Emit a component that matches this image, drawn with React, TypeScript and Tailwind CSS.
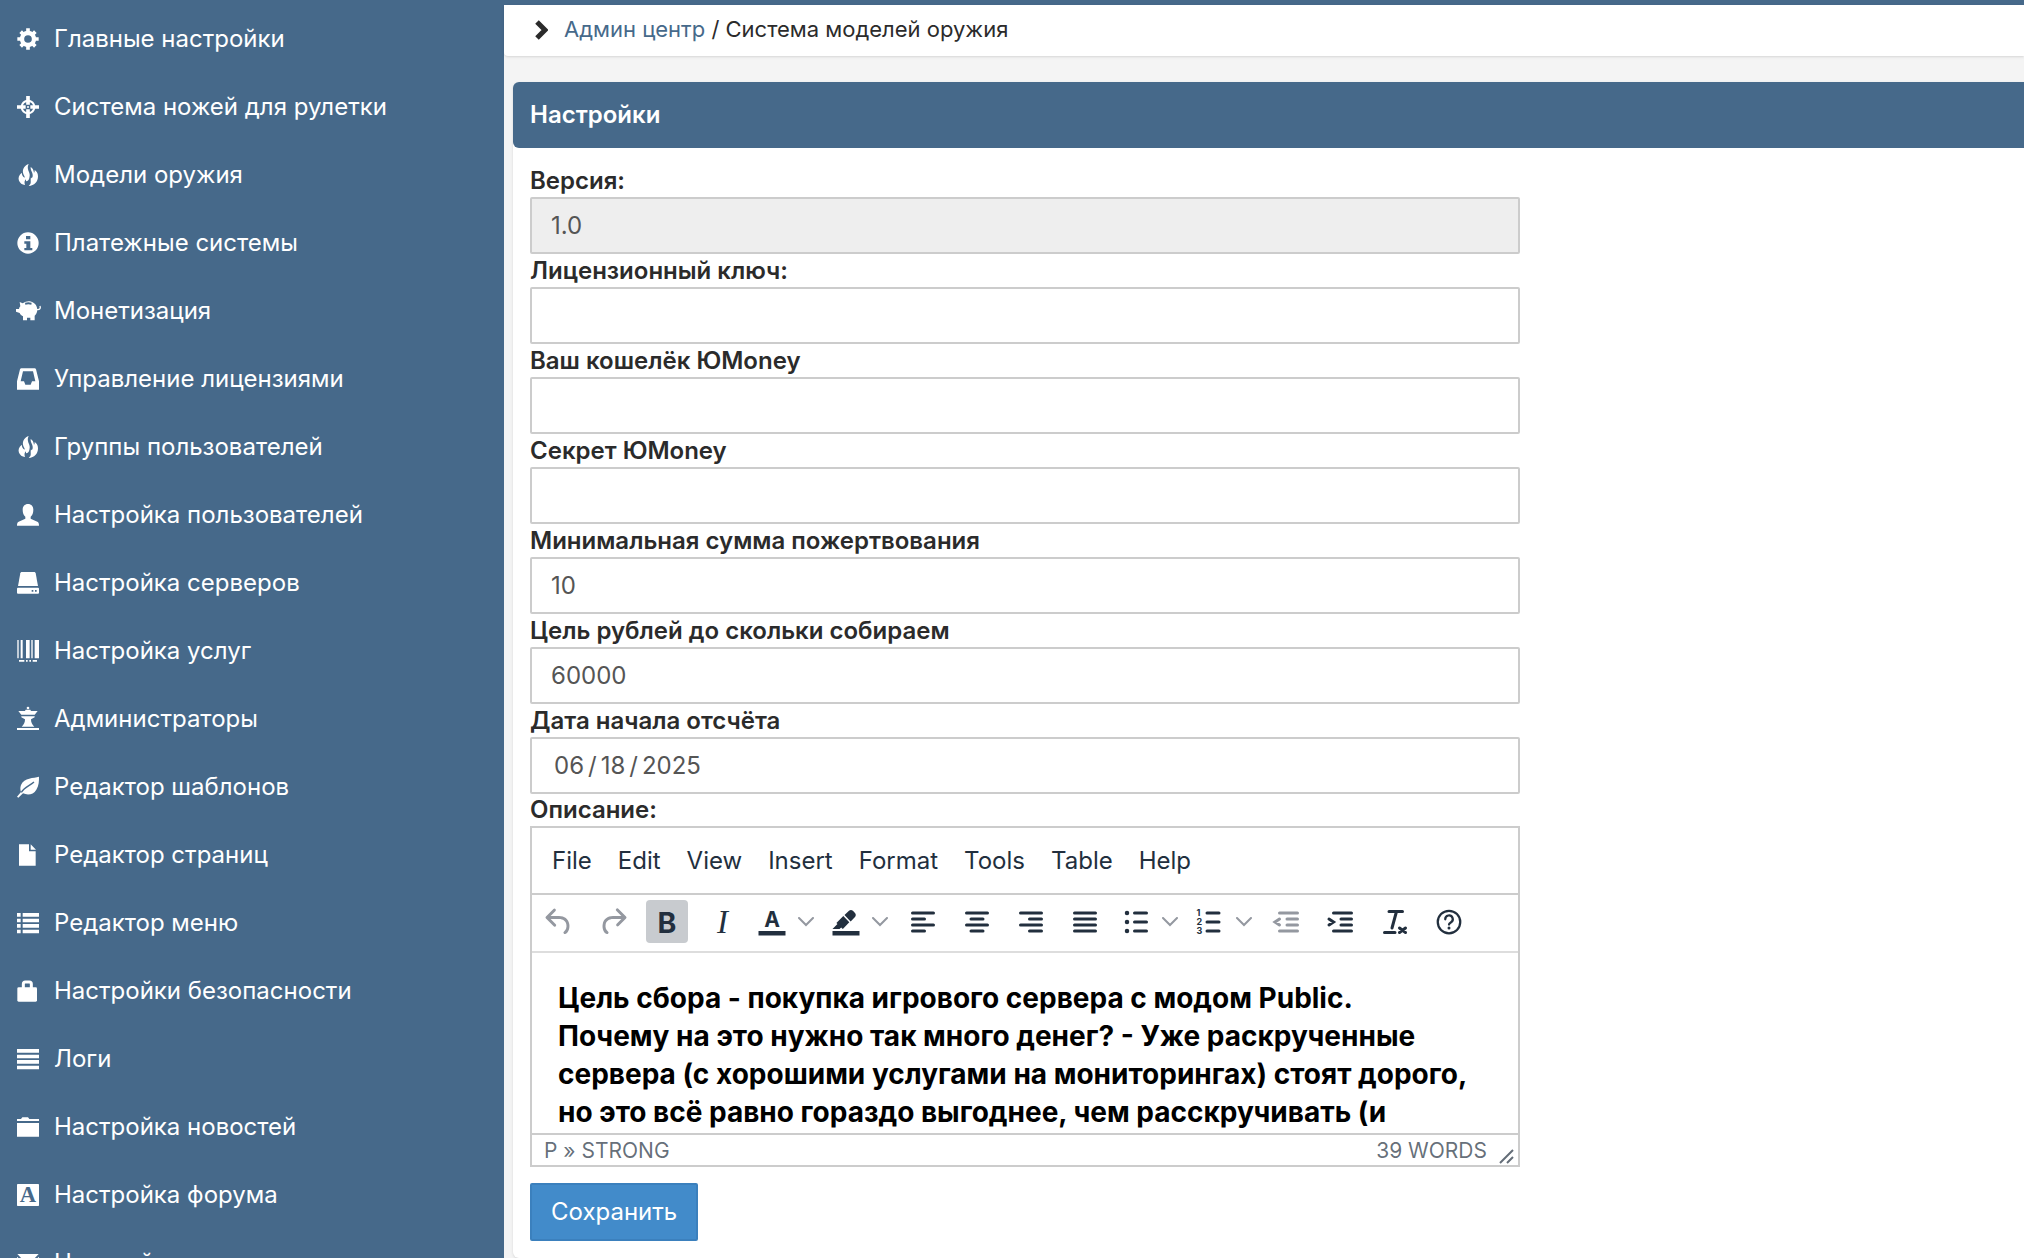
import React, { useState } from 'react'

type MenuItem = {
  label: string
  icon: React.ReactNode
}

type Field = {
  id: string
  label: string
  value: string
  type?: string
  disabled?: boolean
}

const BLUE = '#46698a'

const fire = (
  <>
    <path d="M35 0C24 4 16 14 18 26c1 7 6 9 5 15-5-2-8-7-9-15C5 33 3 43 6 50c3 7 9 12 18 13-3-8-1-13 3-17v6c6-1 9-5 10-10 1-5 2-8 0-15C35 20 29 12 35 0Z" />
    <path d="M41 9c-1 12 8 17 6 28-1 6-4 7-5 3-2 8 0 12-1 17-1 4-3 6-6 9 17-1 28-12 28-29 0-10-5-16-10-19 0 4 0 6-2 8-1-7-4-14-10-17Z" />
  </>
)

const menu: MenuItem[] = [
  {
    label: 'Главные настройки',
    icon: (
      <>
        <circle cx="33" cy="33" r="18" fill="none" stroke="currentColor" strokeWidth="13" />
        <path
          d="M33 1v12M33 53v12M1 33h12M53 33h12M11 11l8 8M47 47l8 8M55 11l-8 8M19 47l-8 8"
          stroke="currentColor"
          strokeWidth="11"
        />
      </>
    ),
  },
  {
    label: 'Система ножей для рулетки',
    icon: (
      <>
        <circle cx="33" cy="33" r="19" fill="none" stroke="currentColor" strokeWidth="6" />
        <path d="M33 0v26M33 40v26M0 33h26M40 33h26" stroke="currentColor" strokeWidth="11" />
        <circle cx="33" cy="33" r="3" />
      </>
    ),
  },
  { label: 'Модели оружия', icon: fire },
  {
    label: 'Платежные системы',
    icon: (
      <path
        fillRule="evenodd"
        d="M33 1a32 32 0 1 1 0 64a32 32 0 1 1 0-64ZM27 12v10h13V12ZM22 28v7h6v13h-6v7h24v-7h-6V28Z"
      />
    ),
  },
  {
    label: 'Монетизация',
    icon: (
      <>
        <path
          fillRule="evenodd"
          d="M8 6l9 4c6-4 12-6 18-6s24 3 26 24c0 9-3 15-8 19v14H40V53H30v8H18V49c-4-2-8-5-10-10l-11-4v-8h9c1-4 2-6 4-8ZM24 8l1 6c6-2 12-2 18 0l1-6c-7-2-13-2-20 0Z"
        />
        <path d="M58 28c9 3 14-2 11-10" fill="none" stroke="currentColor" strokeWidth="4" />
      </>
    ),
  },
  {
    label: 'Управление лицензиями',
    icon: (
      <path
        fillRule="evenodd"
        d="M13 1h40c2 0 3 1 4 3l9 36v25H0V40L9 4c1-2 2-3 4-3ZM18 10L11 40h10l4 10h16l4-10h10L48 10Z"
      />
    ),
  },
  { label: 'Группы пользователей', icon: fire },
  {
    label: 'Настройка пользователей',
    icon: (
      <path d="M33 0c10 0 16 7 16 17s-3 16-8 21v6l20 9c4 2 5 5 5 12H0c0-7 1-10 5-12l20-9v-6c-5-5-8-11-8-21S23 0 33 0Z" />
    ),
  },
  {
    label: 'Настройка серверов',
    icon: (
      <>
        <path d="M15 0h36c3 0 4 1 5 4l7 38H3L10 4c1-3 2-4 5-4Z" />
        <path
          fillRule="evenodd"
          d="M3 47h60q3 0 3 3v12q0 3-3 3H3q-3 0-3-3V50q0-3 3-3ZM44 54v5h5v-5ZM54 54v5h5v-5Z"
        />
      </>
    ),
  },
  {
    label: 'Настройка услуг',
    icon: (
      <path d="M1 0h4v55H1ZM11 0h6v55h-6ZM27 0h11v55H27ZM43 0h4v55h-4ZM53 0h13v55H53ZM6 60h16v5H6ZM27 60h5v5h-5ZM37 60h5v5h-5ZM47 60h13v5H47Z" />
    ),
  },
  {
    label: 'Администраторы',
    icon: (
      <>
        <circle cx="33" cy="0" r="4" />
        <path d="M4 9h20l2-4h14l2 4h20l-9 11H13ZM13 25h40v3l-11 6c0 10 3 15 10 22H14c7-7 10-12 10-22l-11-6ZM0 60h66v6H0Z" />
      </>
    ),
  },
  {
    label: 'Редактор шаблонов',
    icon: (
      <>
        <path d="M66 2C50 7 22 4 12 27c-3 8-2 15 0 21L0 62l4 3 14-13c13 6 31 5 40-11 8-13 8-26 8-39Z" />
        <path d="M13 49C22 34 37 30 51 18" fill="none" stroke={BLUE} strokeWidth="4" />
      </>
    ),
  },
  { label: 'Редактор страниц', icon: <path d="M6 1h30v21h20v43H6ZM41 1l16 16H41Z" /> },
  {
    label: 'Редактор меню',
    icon: (
      <path d="M0 3h11v11H0ZM0 20h11v11H0ZM0 36h11v11H0ZM0 53h11v11H0ZM17 3h49v11H17ZM17 20h49v11H17ZM17 36h49v11H17ZM17 53h49v11H17Z" />
    ),
  },
  {
    label: 'Настройки безопасности',
    icon: (
      <>
        <rect x="1" y="22" width="59" height="43" rx="4" />
        <path d="M19 26V12q0-6 6-6h12q6 0 6 6v14" fill="none" stroke="currentColor" strokeWidth="9" />
      </>
    ),
  },
  { label: 'Логи', icon: <path d="M0 3h66v11H0ZM0 20h66v11H0ZM0 36h66v11H0ZM0 53h66v11H0Z" /> },
  { label: 'Настройка новостей', icon: <path d="M0 9h12l4-5h17l4 5h29v6H0ZM0 21h66v41H0Z" /> },
  {
    label: 'Настройка форума',
    icon: (
      <>
        <rect width="66" height="66" rx="2" />
        <text x="33" y="55" textAnchor="middle" fontSize="68" fontWeight="700" fontFamily="Liberation Serif, serif" fill={BLUE}>
          A
        </text>
      </>
    ),
  },
  { label: 'Настройка почты', icon: <path d="M1 6h64L33 40ZM0 14l20 20L0 56ZM66 14L46 34l20 22ZM24 38l9 8 9-8 20 24H4Z" /> },
]

const fields: Field[] = [
  { id: 'version', label: 'Версия:', value: '1.0', disabled: true },
  { id: 'license', label: 'Лицензионный ключ:', value: '' },
  { id: 'wallet', label: 'Ваш кошелёк ЮMoney', value: '' },
  { id: 'secret', label: 'Секрет ЮMoney', value: '' },
  { id: 'min-sum', label: 'Минимальная сумма пожертвования', value: '10' },
  { id: 'goal', label: 'Цель рублей до скольки собираем', value: '60000' },
  { id: 'start-date', label: 'Дата начала отсчёта', value: '2025-06-18', type: 'date' },
]

const editorMenus = ['File', 'Edit', 'View', 'Insert', 'Format', 'Tools', 'Table', 'Help']

function ToolIcon({ children }: { children: React.ReactNode }) {
  return (
    <svg viewBox="0 0 24 24" className="size-9 shrink-0" fill="currentColor" aria-hidden="true">
      {children}
    </svg>
  )
}

function Lines({ d }: { d: string }) {
  return <path d={d} fill="none" stroke="currentColor" strokeWidth="2" strokeLinecap="round" />
}

type ToolProps = {
  label: string
  active?: boolean
  disabled?: boolean
  children: React.ReactNode
}

function Tool({ label, active, disabled, children }: ToolProps) {
  return (
    <button
      type="button"
      aria-label={label}
      aria-pressed={active}
      disabled={disabled}
      className={`flex h-[43px] w-[42px] shrink-0 items-center justify-center rounded ${
        active ? 'bg-[#c8cbcf]' : ''
      } ${disabled ? 'text-[#9498a0]' : ''}`}
    >
      <ToolIcon>{children}</ToolIcon>
    </button>
  )
}

function SplitTool({ label, children }: ToolProps) {
  return (
    <div className="flex h-[43px] shrink-0 items-center">
      <button type="button" aria-label={label}>
        <ToolIcon>{children}</ToolIcon>
      </button>
      <button type="button" aria-label={`${label} menu`} className="flex w-[26px] justify-end pr-0.5 text-[#9498a0]">
        <svg viewBox="0 0 16 10" className="h-2.5 w-4" fill="none" stroke="currentColor" strokeWidth="2" strokeLinecap="round" aria-hidden="true">
          <path d="M1 1l7 7 7-7" />
        </svg>
      </button>
    </div>
  )
}

function Editor() {
  return (
    <div role="group" aria-labelledby="description-label" className="border-2 border-[#ccc] text-[#222f3e]">
      <div className="flex h-[65px] items-center gap-[26px] px-5 text-2xl">
        {editorMenus.map((m) => (
          <button key={m} type="button">
            {m}
          </button>
        ))}
      </div>

      <div className="flex gap-3 overflow-hidden border-y-2 border-t-[#ccc] border-b-[#ddd] px-1.5 pt-[5px] pb-2">
        <Tool label="Undo" disabled>
          <path d="M6.4 8H12c3.7 0 6.2 2 6.8 5.1.6 2.7-.4 5.6-2.3 6.8a1 1 0 0 1-1-1.8c1.1-.6 1.8-2.7 1.4-4.6-.5-2.1-2.1-3.5-4.9-3.5H6.4l3.3 3.3a1 1 0 1 1-1.4 1.4l-5-5a1 1 0 0 1 0-1.4l5-5a1 1 0 0 1 1.4 1.4L6.4 8Z" />
        </Tool>
        <Tool label="Redo" disabled>
          <path d="M17.6 10H12c-2.8 0-4.4 1.4-4.9 3.5-.4 2 .3 4 1.4 4.6a1 1 0 1 1-1 1.8c-2-1.2-2.9-4.1-2.3-6.8.6-3 3-5.1 6.8-5.1h5.6l-3.3-3.3a1 1 0 1 1 1.4-1.4l5 5a1 1 0 0 1 0 1.4l-5 5a1 1 0 0 1-1.4-1.4l3.3-3.3Z" />
        </Tool>
        <Tool label="Bold" active>
          <text x="12" y="19" textAnchor="middle" fontSize="19" fontWeight="700" fontFamily="Inter, sans-serif">
            B
          </text>
        </Tool>
        <Tool label="Italic">
          <text x="13" y="19" textAnchor="middle" fontSize="22" fontStyle="italic" fontFamily="Liberation Serif, serif">
            I
          </text>
        </Tool>
        <SplitTool label="Text color">
          <text x="12" y="15" textAnchor="middle" fontSize="14" fontWeight="700" fontFamily="Inter, sans-serif">
            A
          </text>
          <path d="M3 18h18v3H3z" />
        </SplitTool>
        <SplitTool label="Background color">
          <path d="M7.7 16.7H3l3.3-3.3-.7-.8L10.2 8l4 4.1-4 4.2c-.2.2-.6.2-.8 0l-.6-.7-1.1 1.1zm5-7.5L11 7.4l3-2.9a2 2 0 0 1 2.6 0L18 6c.7.7.7 2 0 2.7l-2.9 2.9-1.8-1.8-.5-.6zM3 18h18v3H3z" />
        </SplitTool>
        <Tool label="Align left">
          <Lines d="M5 6h14M5 10h8M5 14h14M5 18h8" />
        </Tool>
        <Tool label="Align center">
          <Lines d="M5 6h14M8 10h8M5 14h14M8 18h8" />
        </Tool>
        <Tool label="Align right">
          <Lines d="M5 6h14M11 10h8M5 14h14M11 18h8" />
        </Tool>
        <Tool label="Justify">
          <Lines d="M5 6h14M5 10h14M5 14h14M5 18h14" />
        </Tool>
        <SplitTool label="Bullet list">
          <circle cx="6" cy="6" r="1.5" />
          <circle cx="6" cy="12" r="1.5" />
          <circle cx="6" cy="18" r="1.5" />
          <Lines d="M11 6h8M11 12h8M11 18h8" />
        </SplitTool>
        <SplitTool label="Numbered list">
          <g fontSize="6" fontWeight="700" fontFamily="Inter, sans-serif">
            <text x="3" y="8">1</text>
            <text x="3" y="14">2</text>
            <text x="3" y="20">3</text>
          </g>
          <Lines d="M10 6h8M10 12h8M10 18h8" />
        </SplitTool>
        <Tool label="Decrease indent" disabled>
          <Lines d="M7 6h12M12 10h7M12 14h7M7 18h12M7 10l-3 2 3 2" />
        </Tool>
        <Tool label="Increase indent">
          <Lines d="M7 6h12M12 10h7M12 14h7M7 18h12M4 10l3 2-3 2" />
        </Tool>
        <Tool label="Clear formatting">
          <Lines d="M8 5h9M13 5l-3 11M5 19h7M15 16l4 3M19 16l-4 3" />
        </Tool>
        <Tool label="Help">
          <circle cx="12" cy="12" r="7.5" fill="none" stroke="currentColor" strokeWidth="1.5" />
          <path
            d="M9.5 10.2a2.5 2.5 0 1 1 3.7 2.1c-.8.5-1.2.9-1.2 1.4"
            fill="none"
            stroke="currentColor"
            strokeWidth="1.5"
            strokeLinecap="round"
          />
          <circle cx="12" cy="16" r="1" />
        </Tool>
      </div>

      <div
        contentEditable
        suppressContentEditableWarning
        role="textbox"
        aria-multiline="true"
        aria-labelledby="description-label"
        className="h-[180px] overflow-hidden px-[26px] pt-[26px] text-[28px] leading-[38px] text-black outline-none"
      >
        <p>
          <strong>
            Цель сбора - покупка игрового сервера с модом Public.
            <br />
            Почему на это нужно так много денег? - Уже раскрученные сервера (с хорошими услугами на мониторингах) стоят
            дорого, но это всё равно гораздо выгоднее, чем расскручивать (и
          </strong>
        </p>
      </div>

      <div className="flex h-8 items-center justify-between border-t-2 border-[#ccc] pt-0.5 pl-3 pr-[3px] text-[21px] text-[#222f3e]/70">
        <span>P » STRONG</span>
        <span className="flex h-full items-center gap-3">
          39 WORDS
          <svg viewBox="0 0 16 16" className="size-4 self-end" fill="none" stroke="currentColor" strokeWidth="2" aria-hidden="true">
            <path d="M1 14L14 1M8 14l6-6" />
          </svg>
        </span>
      </div>
    </div>
  )
}

export default function App() {
  const [values, setValues] = useState<Record<string, string>>(
    Object.fromEntries(fields.map((f) => [f.id, f.value])),
  )

  return (
    <div className="flex min-h-screen bg-[#f4f4f4] font-['Inter','Noto_Sans',sans-serif] text-[#2b2b2b]">
      <nav className="h-screen w-[504px] shrink-0 overflow-hidden bg-[#46698a] pt-[5px] text-white">
        <ul>
          {menu.map((item) => (
            <li key={item.label}>
              <a href="#" className="flex h-[68px] items-center gap-[15px] pl-[17px] text-2xl">
                <svg viewBox="0 0 66 66" className="size-[22px] shrink-0 overflow-visible" fill="currentColor" aria-hidden="true">
                  {item.icon}
                </svg>
                {item.label}
              </a>
            </li>
          ))}
        </ul>
      </nav>

      <main className="min-w-0 flex-1 border-t-[5px] border-[#46698a]">
        <div className="flex h-[51px] items-center rounded-bl bg-white pb-0.5 pl-[30px] text-[22px] shadow">
          <svg viewBox="0 0 14 20" className="mr-4 h-5 w-3.5" fill="none" stroke="currentColor" strokeWidth="5" aria-hidden="true">
            <path d="M3 2l8 8-8 8" />
          </svg>
          <p>
            <a href="#" className="text-[#46698a]">
              Админ центр
            </a>{' '}
            / Система моделей оружия
          </p>
        </div>

        <section className="mt-[26px] ml-[9px] rounded-l-md bg-white shadow">
          <h2 className="flex h-[66px] items-center rounded-l-md bg-[#46698a] px-[17px] text-2xl font-semibold text-white">
            Настройки
          </h2>
          <form className="px-[17px] pt-4 pb-[17px]" onSubmit={(e) => e.preventDefault()}>
            <div className="max-w-[990px]">
              {fields.map((f) => (
                <div key={f.id}>
                  <label htmlFor={f.id} className="block text-2xl leading-[33px] font-semibold">
                    {f.label}
                  </label>
                  <input
                    id={f.id}
                    type={f.type ?? 'text'}
                    value={values[f.id]}
                    disabled={f.disabled}
                    onChange={(e) => setValues({ ...values, [f.id]: e.target.value })}
                    className="block h-[57px] w-full rounded-xs border-2 border-[#ccc] bg-white px-[19px] text-2xl text-[#555] disabled:bg-[#eee] [&::-webkit-calendar-picker-indicator]:hidden [&::-webkit-datetime-edit]:pl-0.5 [&::-webkit-datetime-edit-text]:px-[3px]"
                  />
                </div>
              ))}
              <div id="description-label" className="text-2xl leading-8 font-semibold">
                Описание:
              </div>
              <Editor />
            </div>
            <button
              type="submit"
              className="mt-4 h-[58px] rounded-xs border-2 border-[#3b80bd] bg-[#428bca] px-[19px] text-2xl text-white"
            >
              Сохранить
            </button>
          </form>
        </section>
      </main>
    </div>
  )
}
